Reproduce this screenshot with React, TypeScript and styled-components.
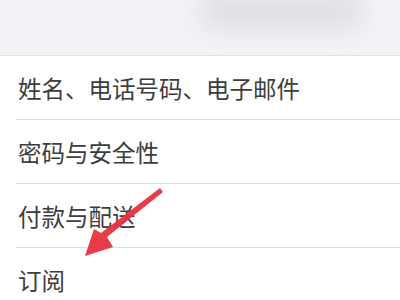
import React from 'react';
import styled, { createGlobalStyle } from 'styled-components';

const GlobalStyle = createGlobalStyle`
  html, body {
    margin: 0;
    padding: 0;
    background: #ffffff;
  }
  body {
    font-family: "Noto Sans CJK SC", "Noto Sans", sans-serif;
  }
`;

const Screen = styled.div`
  position: relative;
  width: 400px;
  height: 300px;
  overflow: hidden;
  background: #ffffff;
`;

const Header = styled.div`
  height: 55px;
  background: #f3f3f7;
  border-bottom: 1px solid #e2e2e6;
  display: flex;
  justify-content: flex-end;
  padding-right: 36px;
  overflow: hidden;
`;

const Blur = styled.div`
  width: 165px;
  height: 38px;
  margin-top: -8px;
  border-radius: 20px;
  background: #dfdfe4;
  filter: blur(12px);
`;

const List = styled.div`
  display: flex;
  flex-direction: column;
  padding-left: 16px;
  background: #ffffff;
`;

const Item = styled.div<{ $last?: boolean }>`
  height: 63px;
  display: flex;
  align-items: center;
  padding-left: 2px;
  border-bottom: ${(p) => (p.$last ? 'none' : '1px solid #dcdcdc')};
`;

const Label = styled.span`
  font-size: 23.5px;
  color: #3d3d3d;
  font-family: "Noto Sans CJK SC", "Noto Sans", sans-serif;
`;

const Arrow = styled.svg`
  position: absolute;
  left: 0;
  top: 0;
  pointer-events: none;
`;

const items = ['姓名、电话号码、电子邮件', '密码与安全性', '付款与配送', '订阅'];

export default function App() {
  return (
    <>
      <GlobalStyle />
      <Screen>
        <Header>
          <Blur />
        </Header>
        <List>
          {items.map((t, i) => (
            <Item key={t} $last={i === items.length - 1}>
              <Label>{t}</Label>
            </Item>
          ))}
        </List>
        <Arrow width="400" height="300" viewBox="0 0 400 300">
          <path
            d="M160 188 L163 192 L107 237 L113 247 L85 256 L94 229 L101 233 Z"
            fill="#e8323f"
            opacity="0.95"
          />
        </Arrow>
      </Screen>
    </>
  );
}
